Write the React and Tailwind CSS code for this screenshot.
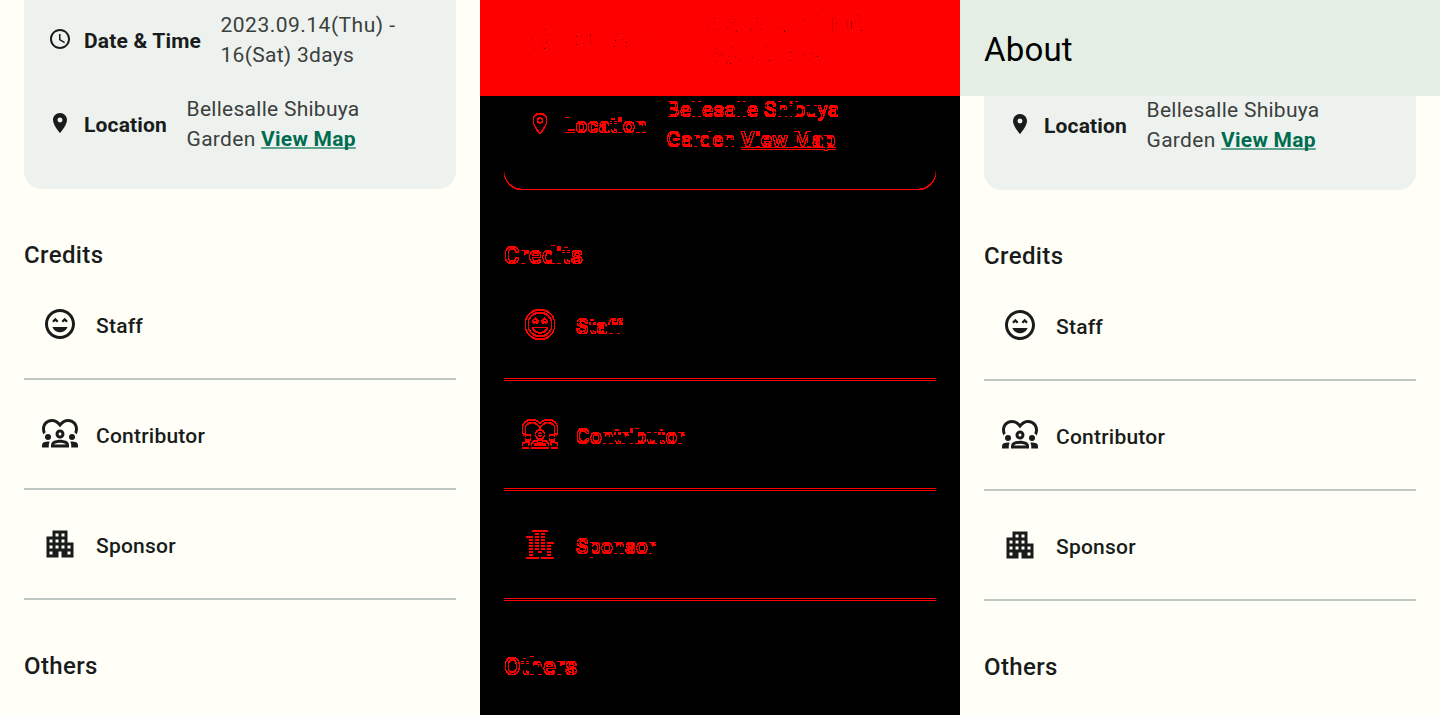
import React from "react";
import {
  MdOutlineSchedule,
  MdLocationOn,
  MdOutlineSentimentVerySatisfied,
  MdOutlineDiversity1,
  MdApartment,
} from "react-icons/md";

const credits = [
  { label: "Staff", Icon: MdOutlineSentimentVerySatisfied },
  { label: "Contributor", Icon: MdOutlineDiversity1 },
  { label: "Sponsor", Icon: MdApartment },
];

function InfoRow({ Icon, label, children }) {
  return (
    <div className="flex h-[60px] items-center">
      <Icon className="mb-[2px] size-6 shrink-0 text-[#191c1a]" />
      <span className="ml-3 mt-[2px] text-[21px] leading-[30px] font-bold tracking-[0.17px] text-[#191c1a]">
        {label}
      </span>
      <p className="ml-[19.5px] text-[21px] leading-[30px] text-[#3b403d]">{children}</p>
    </div>
  );
}

function AboutContent({ showDate = true }) {
  return (
    <div className="flex h-[715px] w-[480px] flex-col overflow-hidden bg-[#fffff8] px-6 text-[#191c1a]">
      <section className="flex h-[189px] shrink-0 flex-col gap-6 rounded-b-[18px] bg-[#eef2ef] px-6 pt-[10px]">
        {showDate ? (
          <InfoRow Icon={MdOutlineSchedule} label="Date & Time">
            <span className="tracking-[0.49px]">2023.09.14(Thu) -</span>
            <br />
            <span className="tracking-[0.29px]">16(Sat) 3days</span>
          </InfoRow>
        ) : (
          <div className="h-[60px]" />
        )}
        <InfoRow Icon={MdLocationOn} label="Location">
          <span className="tracking-[0.27px]">Bellesalle Shibuya</span>
          <br />
          <span className="tracking-[0.3px]">Garden </span>
          <a className="font-bold tracking-[0.25px] text-[#006c4f] underline decoration-[#006c4f]/60 decoration-2 underline-offset-[1px] [text-decoration-skip-ink:none]">
            View Map
          </a>
        </InfoRow>
      </section>
      <h2 className="mt-12 h-[33px] shrink-0 text-[24px] leading-[36px] font-medium tracking-[0.375px]">
        Credits
      </h2>
      <ul className="flex shrink-0 flex-col">
        {credits.map(({ label, Icon }) => (
          <li
            key={label}
            className="flex h-[110px] items-center gap-[18px] border-b-2 border-[#bec9c3] pl-[18px]"
          >
            <Icon className="size-9 shrink-0" />
            <span className="mt-1 text-[21px] leading-[30px] font-medium tracking-[0.22px]">
              {label}
            </span>
          </li>
        ))}
      </ul>
      <h2 className="mt-12 shrink-0 text-[24px] leading-[36px] font-medium tracking-[0.375px]">
        Others
      </h2>
    </div>
  );
}

function ScrolledContent({ title }) {
  return (
    <div className="grid h-[715px] w-[480px] overflow-hidden bg-[#fffff8]">
      <div className="col-start-1 row-start-1 pt-px">
        <AboutContent showDate={false} />
      </div>
      <header className="z-10 col-start-1 row-start-1 flex h-24 items-center bg-[#e5eee5] px-6 pt-[3px] text-[33px] leading-[42px] tracking-[0.2px] text-black">
        {title}
      </header>
    </div>
  );
}

/* Pixels that differ between the two states are red, equal pixels black. */
function Difference() {
  return (
    <div className="isolate grid h-[715px] w-[480px] overflow-hidden">
      <div className="isolate col-start-1 row-start-1 grid brightness-[100] grayscale">
        <div className="col-start-1 row-start-1">
          <AboutContent />
        </div>
        <div className="col-start-1 row-start-1 mix-blend-difference" aria-hidden="true">
          <ScrolledContent />
        </div>
      </div>
      <div className="col-start-1 row-start-1 bg-[#ff0000] mix-blend-multiply" />
    </div>
  );
}

export default function App() {
  return (
    <main className="flex h-[715px] w-[1440px] overflow-hidden font-['Roboto',sans-serif]">
      <AboutContent />
      <Difference />
      <ScrolledContent title="About" />
    </main>
  );
}
